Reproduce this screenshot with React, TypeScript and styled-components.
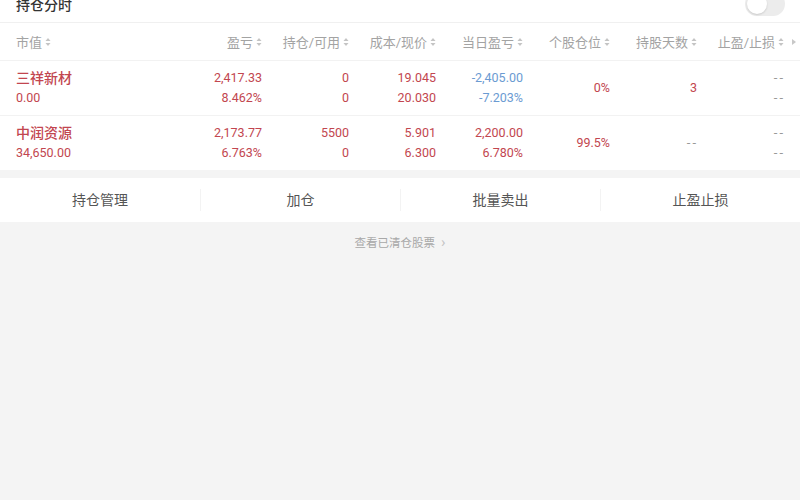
import React from "react";
import styled, { createGlobalStyle } from "styled-components";

const RED = "#c2464f";
const BLUE = "#6b9bd2";

const GlobalStyle = createGlobalStyle`
  html, body {
    margin: 0;
    padding: 0;
    background: #f4f4f4;
    font-family: Roboto, "Noto Sans CJK SC", sans-serif;
    overflow: hidden;
  }
`;

interface Holding {
  name: string;
  value: string;
  pnl: string;
  pnlPct: string;
  hold: string;
  avail: string;
  cost: string;
  price: string;
  dayPnl: string;
  dayPct: string;
  dayUp: boolean;
  position: string;
  days: string;
}

const holdings: Holding[] = [
  {
    name: "三祥新材",
    value: "0.00",
    pnl: "2,417.33",
    pnlPct: "8.462%",
    hold: "0",
    avail: "0",
    cost: "19.045",
    price: "20.030",
    dayPnl: "-2,405.00",
    dayPct: "-7.203%",
    dayUp: false,
    position: "0%",
    days: "3",
  },
  {
    name: "中润资源",
    value: "34,650.00",
    pnl: "2,173.77",
    pnlPct: "6.763%",
    hold: "5500",
    avail: "0",
    cost: "5.901",
    price: "6.300",
    dayPnl: "2,200.00",
    dayPct: "6.780%",
    dayUp: true,
    position: "99.5%",
    days: "--",
  },
];

const headers = ["盈亏", "持仓/可用", "成本/现价", "当日盈亏", "个股仓位", "持股天数", "止盈/止损"];
const actions = ["持仓管理", "加仓", "批量卖出", "止盈止损"];

const SortIcon = () => (
  <svg width="6" height="10" viewBox="0 0 6 10">
    <path d="M3 1 L5.5 4 H0.5 Z" fill="#c4c4c4" />
    <path d="M3 9 L5.5 6 H0.5 Z" fill="#c4c4c4" />
  </svg>
);

export default function App() {
  return (
    <>
      <GlobalStyle />
      <Card>
        <TopBar>
          <Title>持仓分时</Title>
          <Toggle>
            <Knob />
          </Toggle>
        </TopBar>
        <HeaderRow>
          <HeadCell align="left">
            市值
            <SortIcon />
          </HeadCell>
          {headers.map((h) => (
            <HeadCell key={h} align="right">
              {h}
              <SortIcon />
            </HeadCell>
          ))}
          <MoreArrow>
            <svg width="4" height="6" viewBox="0 0 4 6">
              <path d="M0 0 L4 3 L0 6 Z" fill="#c8c8c8" />
            </svg>
          </MoreArrow>
        </HeaderRow>
        {holdings.map((h, i) => (
          <Row key={h.name} last={i === holdings.length - 1}>
            <Cell align="left">
              <Name>{h.name}</Name>
              <Num color={RED}>{h.value}</Num>
            </Cell>
            <Cell align="right">
              <Num color={RED}>{h.pnl}</Num>
              <Num color={RED}>{h.pnlPct}</Num>
            </Cell>
            <Cell align="right">
              <Num color={RED}>{h.hold}</Num>
              <Num color={RED}>{h.avail}</Num>
            </Cell>
            <Cell align="right">
              <Num color={RED}>{h.cost}</Num>
              <Num color={RED}>{h.price}</Num>
            </Cell>
            <Cell align="right">
              <Num color={h.dayUp ? RED : BLUE}>{h.dayPnl}</Num>
              <Num color={h.dayUp ? RED : BLUE}>{h.dayPct}</Num>
            </Cell>
            <Cell align="right">
              <Num color={RED}>{h.position}</Num>
            </Cell>
            <Cell align="right">
              {h.days === "--" ? <Dash>--</Dash> : <Num color={RED}>{h.days}</Num>}
            </Cell>
            <Cell align="right">
              <Dash>--</Dash>
              <Dash>--</Dash>
            </Cell>
          </Row>
        ))}
      </Card>
      <ActionBar>
        {actions.map((a, i) => (
          <Action key={a} first={i === 0}>
            {a}
          </Action>
        ))}
      </ActionBar>
      <ClearedLink>
        查看已清仓股票
        <Chevron>›</Chevron>
      </ClearedLink>
    </>
  );
}

const Card = styled.div`
  background: #fff;
`;

const TopBar = styled.div`
  display: flex;
  align-items: center;
  justify-content: space-between;
  height: 36px;
  margin-top: -14px;
  padding: 0 15px 0 16px;
  border-bottom: 1px solid #f0f0f0;
`;

const Title = styled.div`
  font-size: 14px;
  font-weight: 500;
  color: #333;
`;

const Toggle = styled.div`
  width: 40px;
  height: 24px;
  border-radius: 12px;
  background: #ececec;
  display: flex;
  align-items: center;
  padding: 0 2px;
  box-sizing: border-box;
`;

const Knob = styled.div`
  width: 20px;
  height: 20px;
  border-radius: 50%;
  background: #fff;
  box-shadow: 0 1px 2px rgba(0, 0, 0, 0.15);
`;

const Grid = styled.div`
  display: grid;
  grid-template-columns: 159px repeat(7, 87px);
  padding-left: 16px;
  position: relative;
`;

const HeaderRow = styled(Grid)`
  height: 37px;
  align-items: center;
  border-bottom: 1px solid #f2f2f2;
`;

const HeadCell = styled.div<{ align: "left" | "right" }>`
  display: flex;
  align-items: center;
  justify-content: ${(p) => (p.align === "left" ? "flex-start" : "flex-end")};
  gap: 3px;
  font-size: 13px;
  color: #a3a3a3;
  white-space: nowrap;
`;

const MoreArrow = styled.div`
  position: absolute;
  right: 4px;
  top: 16px;
  display: flex;
`;

const Row = styled(Grid)<{ last: boolean }>`
  height: 54px;
  align-items: center;
  border-bottom: ${(p) => (p.last ? "none" : "1px solid #f2f2f2")};
`;

const Cell = styled.div<{ align: "left" | "right" }>`
  display: flex;
  flex-direction: column;
  justify-content: center;
  align-items: ${(p) => (p.align === "left" ? "flex-start" : "flex-end")};
  white-space: nowrap;
`;

const Name = styled.div`
  font-size: 14px;
  font-weight: 500;
  line-height: 20px;
  color: ${RED};
`;

const Num = styled.div<{ color: string }>`
  font-size: 12.5px;
  line-height: 20px;
  color: ${(p) => p.color};
`;

const Dash = styled.div`
  font-size: 13px;
  line-height: 20px;
  letter-spacing: 2px;
  margin-right: -1px;
  color: #999;
`;

const ActionBar = styled.div`
  margin-top: 8px;
  height: 44px;
  background: #fff;
  display: grid;
  grid-template-columns: repeat(4, 1fr);
  align-items: center;
`;

const Action = styled.div<{ first: boolean }>`
  text-align: center;
  font-size: 14px;
  color: #555;
  line-height: 22px;
  border-left: ${(p) => (p.first ? "none" : "1px solid #f3f3f3")};
`;

const ClearedLink = styled.div`
  display: flex;
  justify-content: center;
  align-items: center;
  gap: 6px;
  padding-top: 12px;
  font-size: 11.5px;
  color: #a8a8a8;
`;

const Chevron = styled.span`
  font-size: 15px;
  color: #c4c4c4;
  line-height: 1;
`;
